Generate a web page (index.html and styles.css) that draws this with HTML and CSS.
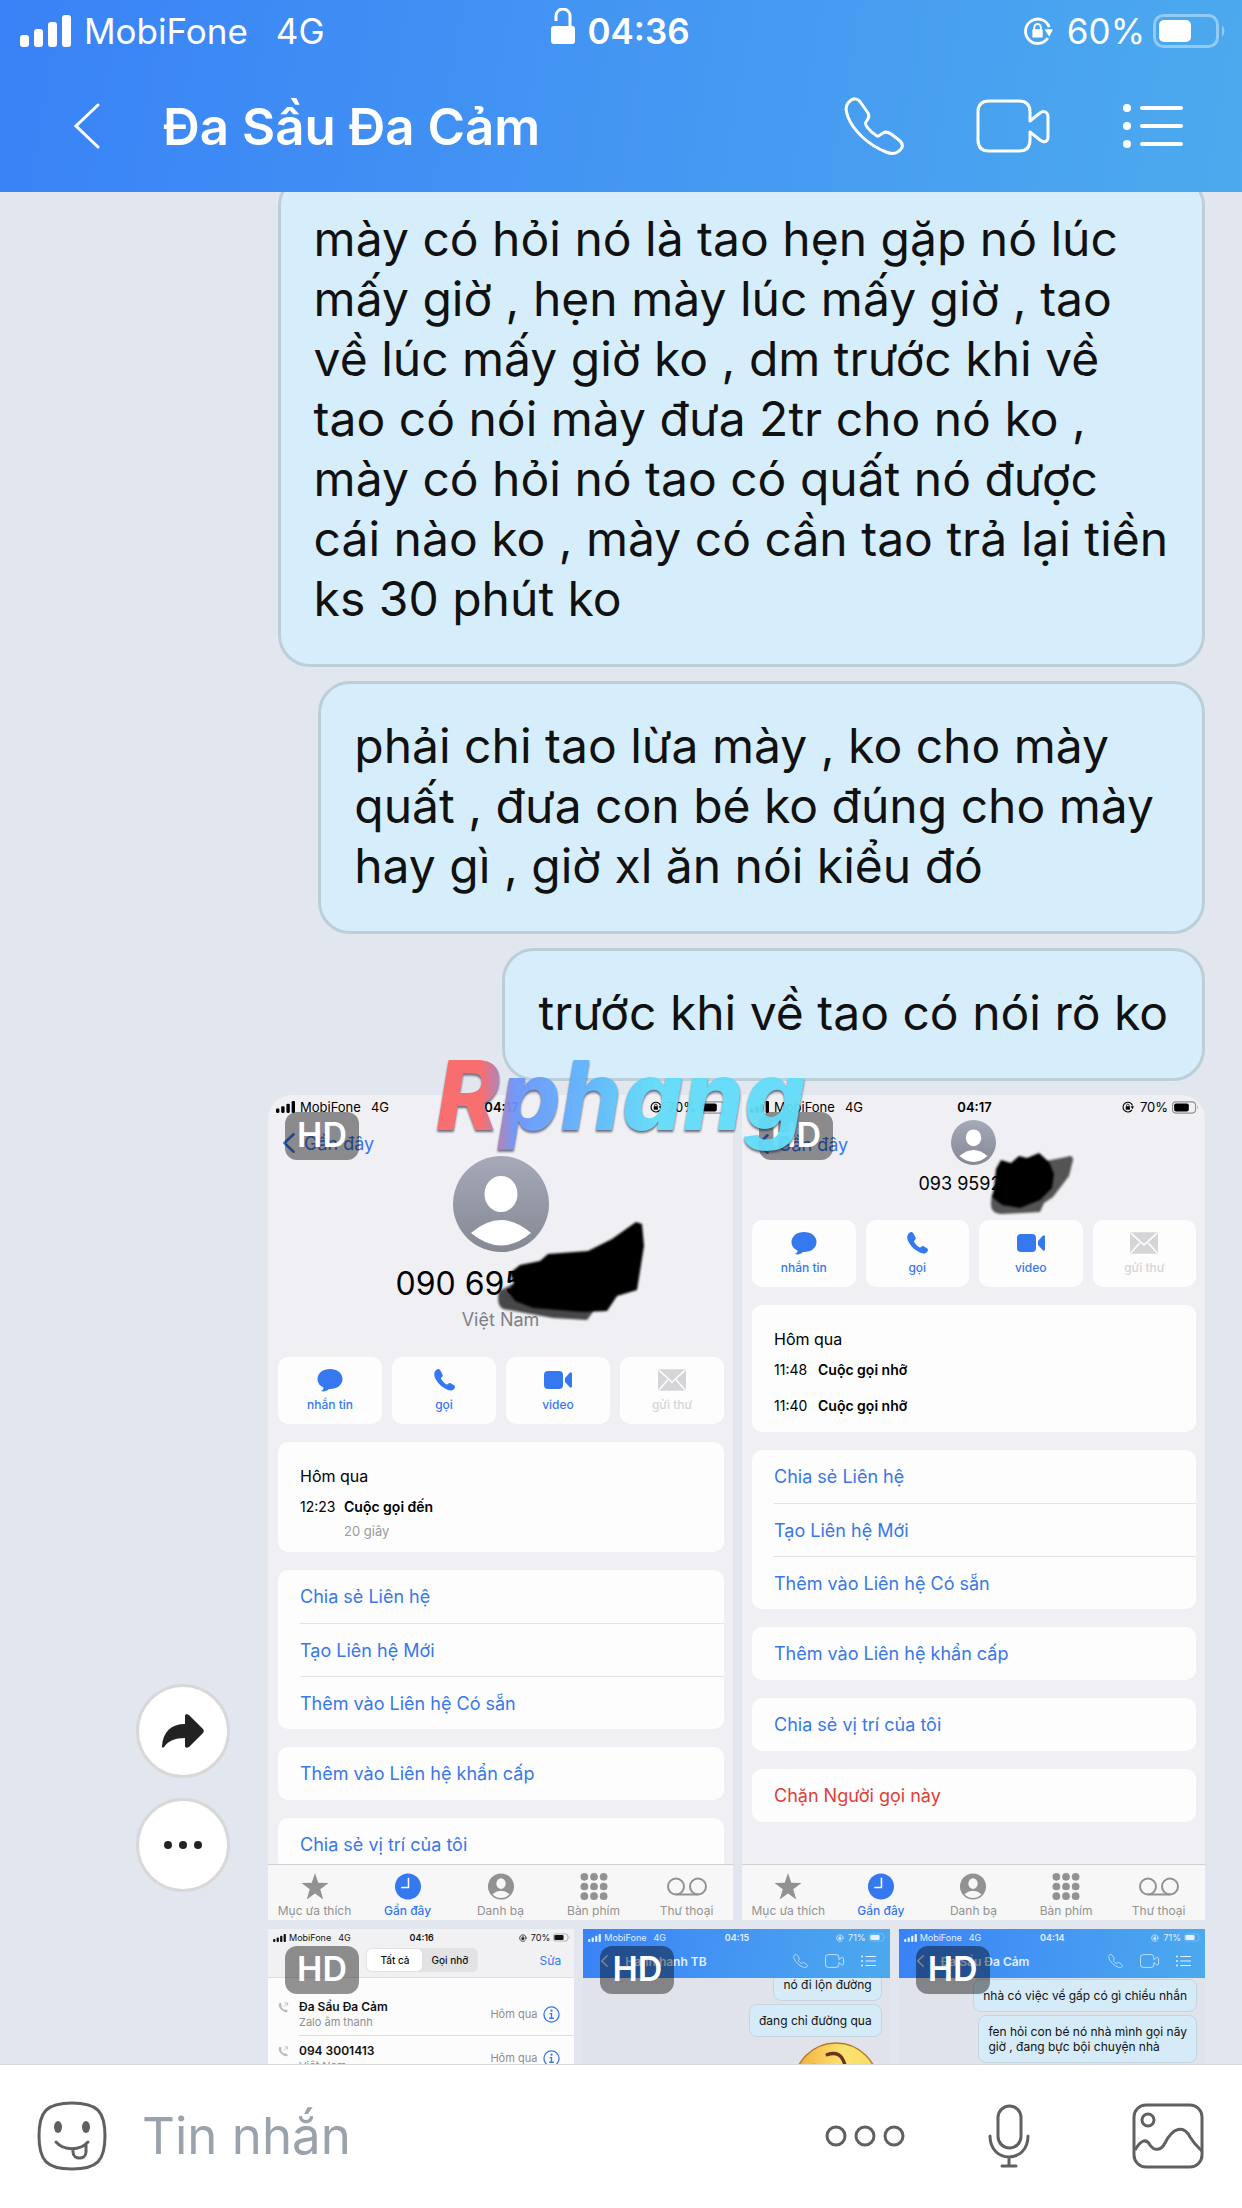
FILE: index.html
```html
<!DOCTYPE html>
<html lang="vi">
<head>
    <meta charset="UTF-8">
    <meta name="viewport" content="width=device-width, initial-scale=1.0">
    <title>Đa Sầu Đa Cảm</title>
    <link rel="stylesheet" href="styles.css">
</head>
<body>
    <!-- Shared icons -->
    <svg class="sprite" aria-hidden="true">
        <symbol id="signal" viewBox="0 0 51 32">
            <rect x="0" y="20" width="9" height="12" rx="3"/>
            <rect x="14" y="14" width="9" height="18" rx="3"/>
            <rect x="28" y="7" width="9" height="25" rx="3"/>
            <rect x="42" y="0" width="9" height="32" rx="3"/>
        </symbol>
        <symbol id="rotate-lock" viewBox="0 0 32 32">
            <path d="M26.5 23.5A13 13 0 1 1 28 12" fill="none" stroke="currentColor" stroke-width="3"/>
            <path d="M23 14h9l-4 8z"/>
            <rect x="10" y="14" width="11" height="9" rx="1"/>
            <path d="M12 15v-3a3.500 3.500 0 0 1 7 0v3" fill="none" stroke="currentColor" stroke-width="2"/>
        </symbol>
        <symbol id="battery" viewBox="0 0 74 34">
            <rect x="1.500" y="1.500" width="63" height="31" rx="9" fill="none" stroke="currentColor" stroke-width="3" opacity=".4"/>
            <rect x="6" y="6" width="32" height="22" rx="5"/>
            <path d="M69 11q5 6 0 12z" opacity=".4"/>
        </symbol>
        <symbol id="battery-high" viewBox="0 0 74 34">
            <rect x="1.500" y="1.500" width="63" height="31" rx="9" fill="none" stroke="currentColor" stroke-width="3" opacity=".4"/>
            <rect x="6" y="6" width="40" height="22" rx="5"/>
            <path d="M69 11q5 6 0 12z" opacity=".4"/>
        </symbol>
        <symbol id="back" viewBox="0 0 28 48">
            <path d="M25 3 3 24l22 21" fill="none" stroke="currentColor" stroke-linecap="round"/>
        </symbol>
        <symbol id="phone-line" viewBox="0 0 60 58">
            <path d="M4 6C9 0 14 1 17 6l7 10c2 4 0 6-2 9-2 2 3 9 11 14 2 1 4-2 6-3 3-2 5-1 8 1l8 6c5 4 4 8 0 11-3 3-8 3-13 1C24 48 9 33 4 20 2 14 1 10 4 6z" fill="none" stroke="currentColor" stroke-width="3" stroke-linejoin="round"/>
        </symbol>
        <symbol id="video-line" viewBox="0 0 74 54">
            <path d="M54 22l10-8c4-3 8-1 8 4v20c0 5-4 6-8 3l-10-8v8q0 11-11 11H13Q2 52 2 41V13Q2 2 13 2h30q11 0 11 11z" fill="none" stroke="currentColor" stroke-width="3" stroke-linejoin="round"/>
        </symbol>
        <symbol id="list" viewBox="0 0 60 46">
            <circle cx="4" cy="5" r="4"/><circle cx="4" cy="23" r="4"/><circle cx="4" cy="41" r="4"/>
            <path d="M19 5h39M19 23h39M19 41h39" fill="none" stroke="currentColor" stroke-width="4" stroke-linecap="round"/>
        </symbol>
        <symbol id="person" viewBox="0 0 96 96">
            <ellipse cx="48" cy="38" rx="16.500" ry="18" fill="#fff"/>
            <path d="M18 77q30-26 60 0-30 25-60 0z" fill="#fff"/>
        </symbol>
        <symbol id="chat" viewBox="0 0 26 24">
            <path d="M13 1c7 0 12.500 4 12.500 10S20 21 13 21h-1c-2 2-5 3-8 2 2-1 2.500-2 2.500-3.500C3 18 .5 15 .5 11 .5 5 6 1 13 1z"/>
        </symbol>
        <symbol id="phone" viewBox="0 0 24 24">
            <path d="M5 1.500c2-1 3 0 4 2l1.500 3c.5 1.500 0 2-1 3-.8.800-.5 1.500.500 2.800 1 1.400 2.300 2.700 3.700 3.700 1 .6 1.600.7 2.300 0 1-1 1.600-1.300 3-.6l3 1.800c1.300.9 1.300 2 .3 3.500-1.500 2-4 2.300-7 1C9.500 19.300 4.500 14 2.600 8.800 1.600 5.500 2.500 3 5 1.500z"/>
        </symbol>
        <symbol id="video" viewBox="0 0 28 20">
            <rect x="0" y="1" width="19" height="18" rx="4"/>
            <path d="M21 8l4.500-5C26.500 2 28 2 28 4v12c0 2-1.500 2-2.500 1L21 12z"/>
        </symbol>
        <symbol id="mail" viewBox="0 0 26 20">
            <rect x="0" y="0" width="26" height="20" rx="2"/>
            <path d="M1 1l12 11L25 1M1 19l8-9M25 19l-8-9" fill="none" stroke="#fdfdfd" stroke-width="1.500"/>
        </symbol>
        <symbol id="star" viewBox="0 0 28 28">
            <path d="M14 0l3.400 10.200L28 10.300l-8.600 6.500L22.600 27.500 14 21.200 5.400 27.500l3.200-10.700L0 10.300l10.600-.1z"/>
        </symbol>
        <symbol id="clock" viewBox="0 0 28 28">
            <circle cx="14" cy="14" r="13.500"/>
            <path d="M14.500 5v10H7" fill="none" stroke="#fff" stroke-width="1.600"/>
        </symbol>
        <symbol id="contact" viewBox="0 0 28 28">
            <circle cx="14" cy="14" r="13.500"/>
            <ellipse cx="14" cy="11" rx="4.800" ry="5.500" fill="#f7f7f8"/>
            <path d="M5 22q9-7 18 0-9 8-18 0z" fill="#f7f7f8"/>
        </symbol>
        <symbol id="keypad" viewBox="0 0 28 28">
            <circle cx="4" cy="4" r="4"/><circle cx="14" cy="4" r="4"/><circle cx="24" cy="4" r="4"/>
            <circle cx="4" cy="14" r="4"/><circle cx="14" cy="14" r="4"/><circle cx="24" cy="14" r="4"/>
            <circle cx="4" cy="24" r="4"/><circle cx="14" cy="24" r="4"/><circle cx="24" cy="24" r="4"/>
        </symbol>
        <symbol id="voicemail" viewBox="0 0 40 20">
            <path d="M9 18h22" stroke="currentColor" stroke-width="2"/>
            <circle cx="9" cy="10" r="8" fill="none" stroke="currentColor" stroke-width="2"/>
            <circle cx="31" cy="10" r="8" fill="none" stroke="currentColor" stroke-width="2"/>
        </symbol>
        <symbol id="info" viewBox="0 0 18 18">
            <circle cx="9" cy="9" r="8" fill="none" stroke="currentColor" stroke-width="1.400"/>
            <circle cx="9" cy="5" r="1.200"/>
            <path d="M7 8h2v5M6.500 13h5" fill="none" stroke="currentColor" stroke-width="1.400"/>
        </symbol>
        <symbol id="outgoing" viewBox="0 0 12 12">
            <path d="M1 1.500q2-1.500 2.500.5L4 4Q3 5 5 7t3 1l2 1q1.500 1 0 2Q7 12 3.500 8.500T1 1.500z"/>
            <path d="M6.500 5L10 1.500M7.500 1H10.500V4" fill="none" stroke="currentColor"/>
        </symbol>
    </svg>

    <header class="header">
        <div class="status">
            <div class="status-left">
                <svg class="status-signal"><use href="#signal"/></svg>
                <span>MobiFone</span>
                <span class="network">4G</span>
            </div>
            <div class="status-time">
                <svg class="status-lock" viewBox="0 0 24 36">
                    <rect x="0" y="18" width="24" height="18" rx="3"/>
                    <path d="M5 13V8a6.500 6.500 0 0 1 14 0v11" fill="none" stroke="currentColor" stroke-width="3"/>
                </svg>
                <span>04:36</span>
            </div>
            <div class="status-right">
                <svg class="status-rotate"><use href="#rotate-lock"/></svg>
                <span>60%</span>
                <svg class="status-battery"><use href="#battery"/></svg>
            </div>
        </div>
        <nav class="nav">
            <button class="icon-btn" aria-label="Quay lại"><svg class="nav-back"><use href="#back"/></svg></button>
            <h1>Đa Sầu Đa Cảm</h1>
            <button class="icon-btn" aria-label="Gọi"><svg class="nav-phone"><use href="#phone-line"/></svg></button>
            <button class="icon-btn" aria-label="Video"><svg class="nav-video"><use href="#video-line"/></svg></button>
            <button class="icon-btn" aria-label="Tùy chọn"><svg class="nav-list"><use href="#list"/></svg></button>
        </nav>
    </header>

    <main class="chat">
        <div class="messages">
            <p class="bubble">mày có hỏi nó là tao hẹn gặp nó lúc<br>mấy giờ , hẹn mày lúc mấy giờ , tao<br>về lúc mấy giờ ko , dm trước khi về<br>tao có nói mày đưa 2tr cho nó ko ,<br>mày có hỏi nó tao có quất nó được<br>cái nào ko , mày có cần tao trả lại tiền<br>ks 30 phút ko</p>
            <p class="bubble bubble-loose">phải chi tao lừa mày , ko cho mày<br>quất , đưa con bé ko đúng cho mày<br>hay gì , giờ xl ăn nói kiểu đó</p>
            <p class="bubble">trước khi về tao có nói rõ ko</p>

            <div class="album-row">
                <div class="album-actions">
                    <button class="round-btn" aria-label="Chia sẻ">
                        <svg class="share-icon" viewBox="0 0 42 34"><path d="M23 2c0-2 2-2 4-1l14 14c1 1 1 3 0 4L27 33c-2 1-4 1-4-1v-8C13 24 6 27 2 33c-1 1-2 1-2-1C1 18 9 10 23 10z"/></svg>
                    </button>
                    <button class="round-btn" aria-label="Thêm">
                        <svg class="more-icon" viewBox="0 0 38 8"><circle cx="4" cy="4" r="4"/><circle cx="19" cy="4" r="4"/><circle cx="34" cy="4" r="4"/></svg>
                    </button>
                </div>

                <div class="album">
                    <div class="album-line album-line-pair">
                        <!-- Contact screen, long header -->
                        <section class="shot shot-large">
                            <div class="mini-status">
                                <div class="status-left"><svg class="mini-signal"><use href="#signal"/></svg><span>MobiFone</span><span class="mini-network">4G</span></div>
                                <b>04:17</b>
                                <div class="status-right"><svg class="mini-rotate"><use href="#rotate-lock"/></svg><span>70%</span><svg class="mini-battery"><use href="#battery-high"/></svg></div>
                            </div>
                            <div class="contact-nav">
                                <a class="back-link" href="#"><svg><use href="#back"/></svg>Gần đây</a>
                            </div>
                            <svg class="avatar"><use href="#person"/></svg>
                            <div class="contact-number">090 695</div>
                            <div class="contact-place">Việt Nam</div>
                            <div class="contact-actions">
                                <button><svg><use href="#chat"/></svg>nhắn tin</button>
                                <button><svg><use href="#phone"/></svg>gọi</button>
                                <button><svg><use href="#video"/></svg>video</button>
                                <button disabled><svg><use href="#mail"/></svg>gửi thư</button>
                            </div>
                            <div class="panels">
                                <div class="panel calls">
                                    <h2>Hôm qua</h2>
                                    <div class="call"><span>12:23</span><b>Cuộc gọi đến</b></div>
                                    <div class="call-length">20 giây</div>
                                </div>
                                <div class="panel"><a href="#">Chia sẻ Liên hệ</a><a href="#">Tạo Liên hệ Mới</a><a href="#">Thêm vào Liên hệ Có sẵn</a></div>
                                <div class="panel"><a href="#">Thêm vào Liên hệ khẩn cấp</a></div>
                                <div class="panel"><a href="#">Chia sẻ vị trí của tôi</a></div>
                            </div>
                            <div class="tabs">
                                <a href="#"><svg><use href="#star"/></svg>Mục ưa thích</a>
                                <a href="#" class="active"><svg><use href="#clock"/></svg>Gần đây</a>
                                <a href="#"><svg><use href="#contact"/></svg>Danh bạ</a>
                                <a href="#"><svg><use href="#keypad"/></svg>Bàn phím</a>
                                <a href="#"><svg><use href="#voicemail"/></svg>Thư thoại</a>
                            </div>
                            <svg class="scribble scribble-long" viewBox="0 0 154 104">
                                <path d="M5 66q-3 14 4 18l50 9 34 2 8-11-80-26z" opacity=".7"/>
                                <path d="M16 48l10-8 20-4 8-7 40-3 24-12 24-17 6 2 2 22-7 44-20 6-10 15-24 1-50-4-18-7-7-10 6-8z"/>
                            </svg>
                            <span class="hd">HD</span>
                        </section>

                        <!-- Contact screen, short header -->
                        <section class="shot shot-large">
                            <div class="mini-status">
                                <div class="status-left"><svg class="mini-signal"><use href="#signal"/></svg><span>MobiFone</span><span class="mini-network">4G</span></div>
                                <b>04:17</b>
                                <div class="status-right"><svg class="mini-rotate"><use href="#rotate-lock"/></svg><span>70%</span><svg class="mini-battery"><use href="#battery-high"/></svg></div>
                            </div>
                            <div class="contact-nav contact-nav-short">
                                <a class="back-link" href="#"><svg><use href="#back"/></svg>Gần đây</a>
                                <svg class="avatar"><use href="#person"/></svg>
                            </div>
                            <div class="contact-number contact-number-short">093 9592</div>
                            <div class="contact-actions">
                                <button><svg><use href="#chat"/></svg>nhắn tin</button>
                                <button><svg><use href="#phone"/></svg>gọi</button>
                                <button><svg><use href="#video"/></svg>video</button>
                                <button disabled><svg><use href="#mail"/></svg>gửi thư</button>
                            </div>
                            <div class="panels">
                                <div class="panel calls">
                                    <h2>Hôm qua</h2>
                                    <div class="call"><span>11:48</span><b>Cuộc gọi nhỡ</b></div>
                                    <div class="call call-next"><span>11:40</span><b>Cuộc gọi nhỡ</b></div>
                                </div>
                                <div class="panel"><a href="#">Chia sẻ Liên hệ</a><a href="#">Tạo Liên hệ Mới</a><a href="#">Thêm vào Liên hệ Có sẵn</a></div>
                                <div class="panel"><a href="#">Thêm vào Liên hệ khẩn cấp</a></div>
                                <div class="panel"><a href="#">Chia sẻ vị trí của tôi</a></div>
                                <div class="panel"><a href="#" class="danger">Chặn Người gọi này</a></div>
                            </div>
                            <div class="tabs">
                                <a href="#"><svg><use href="#star"/></svg>Mục ưa thích</a>
                                <a href="#" class="active"><svg><use href="#clock"/></svg>Gần đây</a>
                                <a href="#"><svg><use href="#contact"/></svg>Danh bạ</a>
                                <a href="#"><svg><use href="#keypad"/></svg>Bàn phím</a>
                                <a href="#"><svg><use href="#voicemail"/></svg>Thư thoại</a>
                            </div>
                            <svg class="scribble scribble-short" viewBox="0 0 94 70">
                                <path d="M62 12l20-4q7-3 7 3l-4 16-16 21-9 6-4 9-38 2q-12 0-11-12l1-8z" opacity=".65"/>
                                <path d="M12 20l5-9 10 3 8-7 8 2 12-5 10 9 5 12-2 14-12 12-20 8-18-3-10-8 2-8z"/>
                            </svg>
                            <span class="hd">HD</span>
                        </section>
                    </div>

                    <div class="album-line">
                        <!-- Recent calls -->
                        <section class="shot shot-small recents">
                            <div class="recents-head">
                                <div class="mini-status">
                                    <div class="status-left"><svg class="mini-signal"><use href="#signal"/></svg><span>MobiFone</span><span class="mini-network">4G</span></div>
                                    <b>04:16</b>
                                    <div class="status-right"><svg class="mini-rotate"><use href="#rotate-lock"/></svg><span>70%</span><svg class="mini-battery"><use href="#battery-high"/></svg></div>
                                </div>
                                <div class="recents-bar">
                                    <div class="segment"><button class="selected">Tất cả</button><button>Gọi nhỡ</button></div>
                                    <a href="#">Sửa</a>
                                </div>
                            </div>
                            <ul class="recents-list">
                                <li>
                                    <svg class="outgoing"><use href="#outgoing"/></svg>
                                    <div class="recents-item"><div><b>Đa Sầu Đa Cảm</b><span>Zalo âm thanh</span></div><time>Hôm qua</time><svg class="info"><use href="#info"/></svg></div>
                                </li>
                                <li>
                                    <svg class="outgoing"><use href="#outgoing"/></svg>
                                    <div class="recents-item"><div><b>094 3001413</b><span>Việt Nam</span></div><time>Hôm qua</time><svg class="info"><use href="#info"/></svg></div>
                                </li>
                            </ul>
                            <span class="hd">HD</span>
                        </section>

                        <section class="shot shot-small">
                            <div class="mini-header">
                                <div class="mini-status">
                                    <div class="status-left"><svg class="mini-signal"><use href="#signal"/></svg><span>MobiFone</span><span class="mini-network">4G</span></div>
                                    <b>04:15</b>
                                    <div class="status-right"><svg class="mini-rotate"><use href="#rotate-lock"/></svg><span>71%</span><svg class="mini-battery"><use href="#battery-high"/></svg></div>
                                </div>
                                <div class="mini-nav">
                                    <svg class="mini-back"><use href="#back"/></svg>
                                    <b>Hanh hanh TB</b>
                                    <svg><use href="#phone-line"/></svg>
                                    <svg class="mini-video"><use href="#video-line"/></svg>
                                    <svg><use href="#list"/></svg>
                                </div>
                            </div>
                            <div class="mini-chat">
                                <p class="mini-bubble cut">nó đi lộn đường</p>
                                <p class="mini-bubble">đang chỉ đường qua</p>
                                <svg class="emoji" viewBox="0 0 90 90">
                                    <defs><linearGradient id="face"><stop offset="0" stop-color="#f2ae3c"/><stop offset=".6" stop-color="#fbe36f"/><stop offset="1" stop-color="#f7dc62"/></linearGradient></defs>
                                    <circle cx="45" cy="45" r="43" fill="url(#face)" stroke="#b5792a" stroke-width="1.500"/>
                                    <path d="M36 14q14-5 18 10" fill="none" stroke="#6f3322" stroke-width="3.500" stroke-linecap="round"/>
                                    <path d="M17 27q7-5 14 2" fill="none" stroke="#8e5428" stroke-width="3" stroke-linecap="round"/>
                                </svg>
                            </div>
                            <span class="hd">HD</span>
                        </section>

                        <section class="shot shot-small">
                            <div class="mini-header">
                                <div class="mini-status">
                                    <div class="status-left"><svg class="mini-signal"><use href="#signal"/></svg><span>MobiFone</span><span class="mini-network">4G</span></div>
                                    <b>04:14</b>
                                    <div class="status-right"><svg class="mini-rotate"><use href="#rotate-lock"/></svg><span>71%</span><svg class="mini-battery"><use href="#battery-high"/></svg></div>
                                </div>
                                <div class="mini-nav">
                                    <svg class="mini-back"><use href="#back"/></svg>
                                    <b>Đa Sầu Đa Cảm</b>
                                    <svg><use href="#phone-line"/></svg>
                                    <svg class="mini-video"><use href="#video-line"/></svg>
                                    <svg><use href="#list"/></svg>
                                </div>
                            </div>
                            <div class="mini-chat mini-chat-full">
                                <p class="mini-bubble">nhà có việc về gấp có gì chiều nhắn</p>
                                <p class="mini-bubble">fen hỏi con bé nó nhà mình gọi nãy<br>giờ , đang bực bội chuyện nhà</p>
                            </div>
                            <span class="hd">HD</span>
                        </section>
                    </div>
                </div>
                <div class="watermark">Rphang</div>
            </div>
        </div>
    </main>

    <form class="composer">
        <button type="button" class="icon-btn" aria-label="Nhãn dán">
            <svg class="sticker-icon" viewBox="0 0 70 70">
                <path d="M35 2C60 2 68 10 68 35S60 68 35 68 2 60 2 35 10 2 35 2z" fill="none" stroke="currentColor" stroke-width="3"/>
                <ellipse cx="21" cy="26" rx="4" ry="6"/><ellipse cx="49" cy="26" rx="4" ry="6"/>
                <path d="M19 41c8 9 24 9 32 0M36 48v3c0 8 13 8 13 0v-7" fill="none" stroke="currentColor" stroke-width="3" stroke-linecap="round"/>
            </svg>
        </button>
        <input type="text" aria-label="Tin nhắn" placeholder="Tin nhắn">
        <button type="button" class="icon-btn" aria-label="Thêm">
            <svg class="dots-icon" viewBox="0 0 80 22"><g fill="none" stroke="currentColor" stroke-width="3"><circle cx="11" cy="11" r="9"/><circle cx="40" cy="11" r="9"/><circle cx="69" cy="11" r="9"/></g></svg>
        </button>
        <button type="button" class="icon-btn" aria-label="Ghi âm">
            <svg class="mic-icon" viewBox="0 0 42 64"><g fill="none" stroke="currentColor" stroke-width="3" stroke-linecap="round"><rect x="10" y="2" width="23" height="42" rx="11.500"/><path d="M2 32c0 28 38 28 38 0M21 53v8M14 62h14"/></g></svg>
        </button>
        <button type="button" class="icon-btn" aria-label="Ảnh">
            <svg class="photo-icon" viewBox="0 0 72 66"><g fill="none" stroke="currentColor" stroke-width="3"><rect x="2" y="2" width="68" height="62" rx="12"/><circle cx="16" cy="17" r="6"/><path d="M3 47c6-10 11-12 15-5 4 6 11 6 15-2 8-16 19-18 25-6 5 8 8 10 12 14"/></g></svg>
        </button>
    </form>
</body>
</html>
```
FILE: styles.css
```css
* {
    margin: 0;
    padding: 0;
    box-sizing: border-box;
}

body {
    font-family: Inter, "Noto Sans", sans-serif;
    display: flex;
    flex-direction: column;
    height: 100vh;
    overflow: hidden;
    color: #111;
    background: #e2e6ef;
}

svg {
    display: block;
    fill: currentColor;
    flex-shrink: 0;
}

a {
    color: inherit;
    text-decoration: none;
}

button {
    font-family: inherit;
    border: none;
    background: none;
    cursor: pointer;
}

.sprite {
    position: absolute;
    width: 0;
    height: 0;
}

/* Header */
.header {
    color: #fff;
    background: linear-gradient(100deg, #3982f7, #4598f2 55%, #4caaee);
    position: relative;
    z-index: 1;
}

.status {
    display: grid;
    grid-template-columns: 1fr auto 1fr;
    align-items: center;
    height: 62px;
    padding: 0 15px 0 20px;
    font-size: 35px;
}

.status-left,
.status-right,
.status-time {
    display: flex;
    align-items: center;
}

.status-right {
    justify-content: flex-end;
}

.status-signal {
    width: 51px;
    height: 32px;
    margin-right: 13px;
}

.network {
    margin-left: 28px;
}

.status-time {
    gap: 12px;
    padding-right: 6px;
    font-weight: 600;
}

.status-lock {
    width: 24px;
    height: 36px;
    margin-bottom: 10px;
}

.status-rotate {
    width: 30px;
    height: 30px;
    margin-right: 14px;
}

.status-battery {
    width: 74px;
    height: 34px;
    margin-left: 8px;
}

.nav {
    display: flex;
    align-items: center;
    height: 130px;
    padding: 0 59px 2px 73px;
}

.nav h1 {
    flex: 1;
    margin-left: 62px;
    font-size: 51px;
    font-weight: 600;
}

.icon-btn {
    color: inherit;
}

.nav-back {
    width: 28px;
    height: 48px;
    stroke-width: 3;
}

.nav-phone {
    width: 60px;
    height: 58px;
    margin-right: 72px;
}

.nav-video {
    width: 74px;
    height: 54px;
    margin-right: 73px;
}

.nav-list {
    width: 60px;
    height: 46px;
}

/* Messages */
.chat {
    flex: 1;
    min-height: 0;
    overflow: hidden;
}

.messages {
    display: flex;
    flex-direction: column;
    align-items: flex-end;
    gap: 14px;
    margin-top: -18px;
    padding-right: 37px;
}

.bubble {
    padding: 32px 34px 35px 33px;
    border: 3px solid #bccfd7;
    border-radius: 32px;
    background: #d6eefc;
    font-size: 48px;
    line-height: 60px;
    white-space: nowrap;
}

.bubble-loose {
    padding-right: 48px;
}

.album-row {
    position: relative;
    display: flex;
    align-items: center;
    align-self: stretch;
    gap: 38px;
    padding-left: 136px;
}

.album-actions {
    display: flex;
    flex-direction: column;
    gap: 20px;
}

.round-btn {
    display: flex;
    align-items: center;
    justify-content: center;
    width: 94px;
    height: 94px;
    border: 3px solid #d8d8d8;
    border-radius: 50%;
    color: #222;
    background: #fff;
}

.share-icon {
    width: 42px;
    height: 34px;
}

.more-icon {
    width: 38px;
    height: 8px;
}

/* Photo album */
.album {
    flex: 1;
    display: flex;
    flex-direction: column;
    gap: 9px;
    border-radius: 24px;
    overflow: hidden;
}

.album-line {
    display: grid;
    grid-template-columns: repeat(3, 1fr);
    gap: 9px;
}

.album-line-pair {
    grid-template-columns: 465fr 463fr;
}

.shot {
    position: relative;
    min-width: 0;
    display: flex;
    flex-direction: column;
    overflow: hidden;
}

.shot-large {
    height: 825px;
    color: #000;
    background: #efeff4;
}

.shot-small {
    height: 552px;
    background: #e0e3ea;
}

.hd {
    position: absolute;
    top: 17px;
    left: 17px;
    width: 74px;
    height: 48px;
    border-radius: 12px;
    background: rgba(0, 0, 0, 0.42);
    color: #fff;
    font-size: 34px;
    font-weight: 600;
    line-height: 46px;
    text-align: center;
}

.mini-status {
    display: grid;
    grid-template-columns: 1fr auto 1fr;
    align-items: center;
    height: 24px;
    padding: 0 6px 0 8px;
    font-size: 13px;
}

.mini-status b {
    font-weight: 600;
}

.mini-signal {
    width: 19px;
    height: 12px;
    margin-right: 5px;
}

.mini-network {
    margin-left: 10px;
}

.mini-rotate {
    width: 12px;
    height: 12px;
    margin-right: 6px;
}

.mini-battery {
    width: 27px;
    height: 13px;
    margin-left: 4px;
}

.contact-nav {
    display: flex;
    height: 37px;
    padding-left: 15px;
}

.contact-nav-short {
    justify-content: center;
    height: 46px;
    padding: 1px 0 0;
}

.back-link {
    display: flex;
    align-items: center;
    gap: 9px;
    height: 48px;
    font-size: 18px;
    color: #3878e8;
}

.back-link svg {
    width: 12px;
    height: 20px;
    stroke-width: 6;
}

.contact-nav-short .back-link {
    position: absolute;
    left: 15px;
}

.avatar {
    align-self: center;
    width: 96px;
    height: 96px;
    border-radius: 50%;
    background: linear-gradient(#a5a9b8, #858994);
}

.contact-nav-short .avatar {
    width: 45px;
    height: 45px;
}

.contact-number {
    width: 210px;
    margin: 12px auto 0;
    font-size: 32px;
    line-height: 40px;
}

.contact-number-short {
    width: 110px;
    margin-top: 8px;
    font-size: 18px;
    line-height: 22px;
}

.contact-place {
    margin-top: 4px;
    font-size: 18px;
    line-height: 24px;
    text-align: center;
    color: #808085;
}

.contact-actions {
    display: flex;
    gap: 10px;
    margin: 25px 9px 18px 10px;
}

.contact-actions button {
    flex: 1 1 0;
    display: flex;
    flex-direction: column;
    align-items: center;
    gap: 5px;
    height: 67px;
    padding-top: 11px;
    border-radius: 10px;
    font-size: 12px;
    font-weight: 500;
    line-height: 16px;
    color: #3578f0;
    background: #fdfdfd;
}

.contact-actions button:disabled {
    color: #d5d5d7;
}

.contact-actions svg {
    width: 28px;
    height: 24px;
}

.panels {
    flex: 1;
    min-height: 0;
    overflow: hidden;
    display: flex;
    flex-direction: column;
    gap: 18px;
    padding: 0 9px 0 10px;
}

.panel {
    flex-shrink: 0;
    border-radius: 10px;
    padding-left: 22px;
    background: #fdfdfd;
}

.panel a {
    display: block;
    height: 53px;
    font-size: 18px;
    line-height: 53px;
    color: #3878e8;
}

.panel a + a {
    border-top: 1px solid #e2e2e4;
}

.panel a.danger {
    color: #dd4038;
}

.calls {
    padding-top: 23px;
    padding-bottom: 9px;
}

.calls h2 {
    margin-bottom: 8px;
    font-size: 16px;
    font-weight: 400;
    line-height: 22px;
}

.call {
    display: flex;
    font-size: 14px;
    line-height: 24px;
}

.call span {
    width: 44px;
}

.call b {
    font-weight: 600;
}

.call-next {
    margin: 12px 0 5px;
}

.call-length {
    padding-left: 44px;
    font-size: 13px;
    line-height: 24px;
    color: #9a9a9c;
}

.tabs {
    display: grid;
    grid-template-columns: repeat(5, 1fr);
    height: 56px;
    padding-top: 8px;
    border-top: 1px solid #d0d0d4;
    background: #f7f7f8;
}

.tabs a {
    display: flex;
    flex-direction: column;
    align-items: center;
    gap: 4px;
    font-size: 12px;
    line-height: 14px;
    color: #929292;
    white-space: nowrap;
}

.tabs .active {
    color: #3578f0;
    font-weight: 500;
}

.tabs svg {
    width: 40px;
    height: 27px;
}

/* Black marker over the numbers */
.scribble {
    position: absolute;
    color: #000;
    overflow: visible;
    filter: blur(1px);
}

.scribble-long {
    top: 130px;
    left: 226px;
    width: 154px;
    height: 104px;
}

.scribble-short {
    top: 54px;
    left: 242px;
    width: 94px;
    height: 70px;
}

/* Small screens in the second line */
.shot-small .mini-status {
    height: 17px;
    padding: 0 4px 0 5px;
    font-size: 9px;
}

.shot-small .mini-signal {
    width: 13px;
    height: 8px;
    margin-right: 3px;
}

.shot-small .mini-network {
    margin-left: 7px;
}

.shot-small .mini-rotate {
    width: 8px;
    height: 8px;
    margin-right: 4px;
}

.shot-small .mini-battery {
    width: 17px;
    height: 9px;
    margin-left: 3px;
}

.recents {
    background: #fcfcfc;
}

.recents-head {
    height: 49px;
    border-bottom: 1px solid #dedee0;
    background: #f1f1f3;
}

.recents-bar {
    display: flex;
    align-items: center;
    justify-content: flex-end;
    gap: 61px;
    padding: 2px 13px 0 0;
    font-size: 12px;
    color: #3878e8;
}

.segment {
    display: flex;
    width: 112px;
    height: 24px;
    padding: 1px;
    border-radius: 6px;
    background: #e2e2e4;
}

.segment button {
    flex: 1;
    font-size: 10px;
    font-weight: 500;
    color: #111;
}

.segment .selected {
    border-radius: 5px;
    background: #fff;
}

.recents-list {
    padding-top: 14px;
    list-style: none;
}

.recents-list li {
    display: flex;
    gap: 10px;
    padding: 7px 0 0 10px;
}

.outgoing {
    width: 11px;
    height: 11px;
    margin-top: 3px;
    color: #bbb;
}

.recents-item {
    flex: 1;
    display: flex;
    align-items: center;
    gap: 6px;
    height: 37px;
    padding: 0 14px 6px 0;
    border-bottom: 1px solid #dedee0;
}

.recents-item div {
    flex: 1;
}

.recents-item b,
.recents-item span {
    display: block;
    font-size: 12px;
    font-weight: 600;
    line-height: 16px;
}

.recents-item span {
    font-size: 11px;
    font-weight: 400;
    line-height: 15px;
    color: #8e8e92;
}

.recents-item time {
    font-size: 11px;
    color: #8e8e92;
}

.info {
    width: 17px;
    height: 17px;
    color: #3878e8;
}

.mini-header {
    height: 49px;
    color: #e4f0fe;
    background: linear-gradient(100deg, #3982f7, #4598f2 55%, #4caaee);
}

.mini-nav {
    display: flex;
    align-items: center;
    gap: 17px;
    height: 30px;
    padding: 0 14px 0 18px;
}

.mini-nav b {
    flex: 1;
    font-size: 12px;
    font-weight: 600;
}

.mini-nav svg {
    width: 15px;
    height: 14px;
}

.mini-nav .mini-back {
    width: 7px;
    height: 12px;
    stroke-width: 5;
}

.mini-nav .mini-video {
    width: 19px;
}

.mini-chat {
    display: flex;
    flex-direction: column;
    align-items: flex-end;
    gap: 3px;
    padding-right: 8px;
    overflow: hidden;
}

.mini-chat-full {
    padding-top: 1px;
}

.mini-bubble {
    padding: 8px 9px;
    border: 1px solid #c3d6df;
    border-radius: 8px;
    background: #d6ebf8;
    font-size: 12px;
    line-height: 15px;
    white-space: nowrap;
}

.cut {
    margin-top: -10px;
}

.emoji {
    width: 88px;
    height: 88px;
    margin: 1px 2px 0 0;
}

.watermark {
    position: absolute;
    top: -57px;
    left: 436px;
    padding-right: 6px;
    font-size: 96px;
    font-style: italic;
    font-weight: 800;
    line-height: 114px;
    color: transparent;
    background: linear-gradient(90deg, #fa6868 12%, #6b95fb 21%, #5fb8fb 42%, #62dcf9 58%);
    background-clip: text;
    opacity: 0.95;
    filter: drop-shadow(0 2px 1px rgba(40, 40, 60, 0.7));
}

/* Message box */
.composer {
    display: flex;
    align-items: center;
    height: 144px;
    padding: 0 38px 2px 37px;
    border-top: 1px solid #d9d9d9;
    color: #606060;
    background: #fff;
}

.composer input {
    flex: 1;
    min-width: 0;
    margin-left: 35px;
    border: none;
    outline: none;
    font-family: inherit;
    font-size: 51px;
    color: #111;
}

.composer input::placeholder {
    color: #9aa3ab;
}

.sticker-icon {
    width: 70px;
    height: 70px;
}

.dots-icon {
    width: 80px;
    height: 22px;
    margin-right: 83px;
}

.mic-icon {
    width: 42px;
    height: 64px;
    margin-right: 102px;
}

.photo-icon {
    width: 72px;
    height: 66px;
}
```
